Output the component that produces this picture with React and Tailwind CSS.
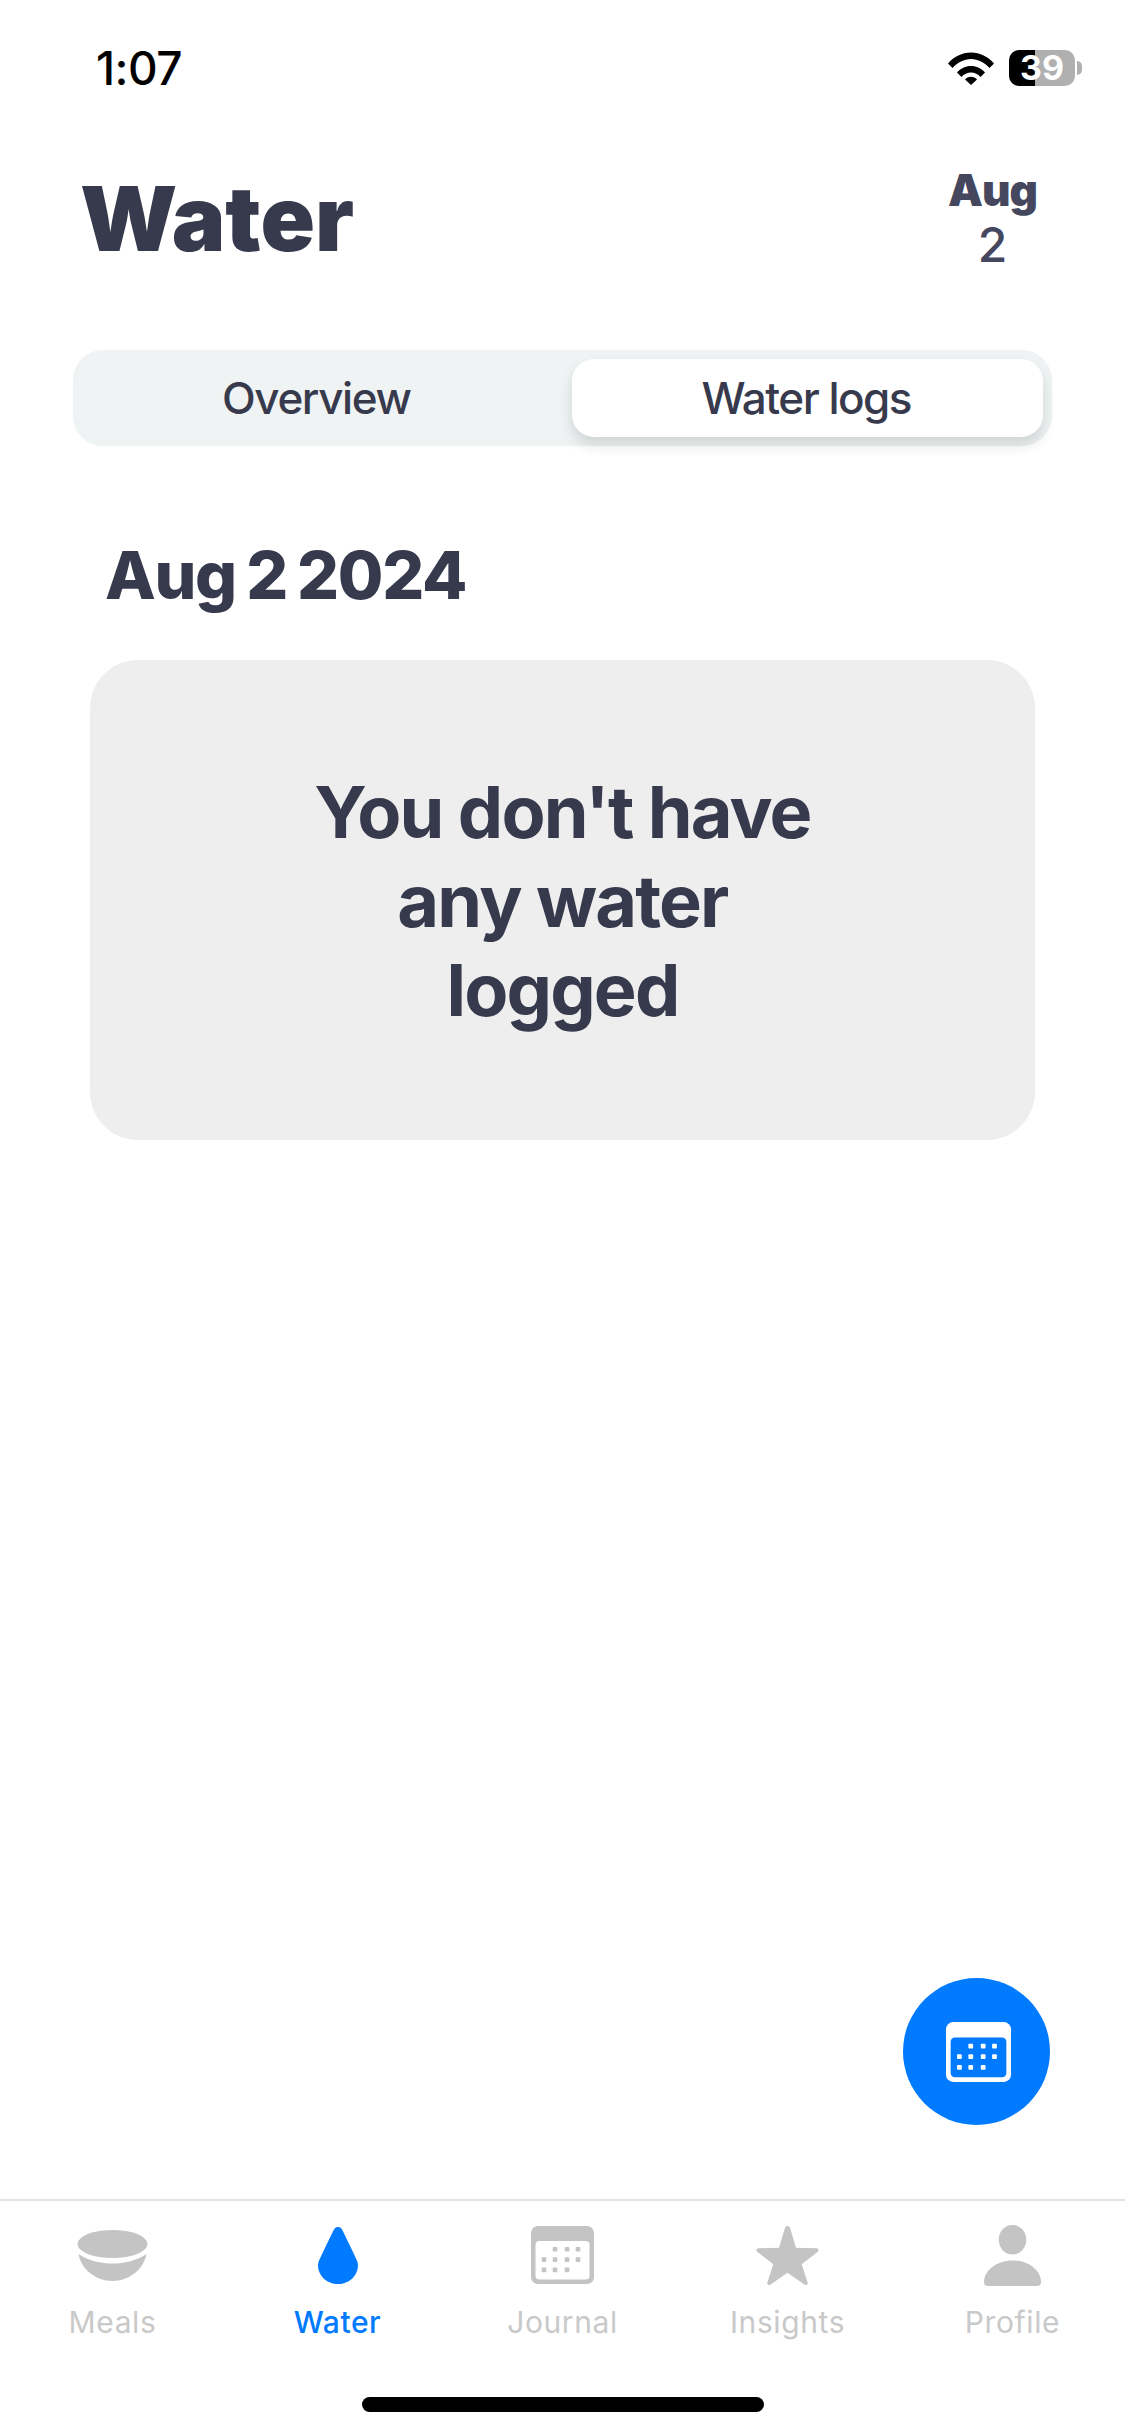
import { useState } from 'react';

const CalendarIcon = ({ className, frame, dots, body }) => {
  const rows = [
    [24, 36, 47],
    [13, 24, 36, 47],
    [13, 24, 36],
  ];
  return (
    <svg viewBox="0 0 63 58" className={className}>
      <rect width="63" height="58" rx="7" fill={frame} />
      <rect x="4.5" y="15" width="54" height="38.5" rx="4" fill={body} />
      {rows.map((row, r) =>
        row.map((x) => (
          <rect key={`${r}-${x}`} x={x - 2.3} y={21 + r * 10.3} width="4.6" height="4.6" rx="0.8" fill={dots} />
        ))
      )}
    </svg>
  );
};

const BowlIcon = () => (
  <svg viewBox="0 0 71 51" className="w-[71px] h-[51px]">
    <ellipse cx="35.5" cy="14" rx="35" ry="14" fill="#c4c4c4" />
    <path d="M1.5 24C12 31 24 33.5 35.5 33.5S59 31 69.5 24C67 39 52 51 35.5 51S4 39 1.5 24Z" fill="#c4c4c4" />
  </svg>
);

const DropIcon = () => (
  <svg viewBox="0 0 40 57" className="w-[40px] h-[57px]">
    <path
      d="M20 0C22.5 0 23.6 1.6 24.6 3.6L36.4 28C38.6 32.6 40 35.5 40 38C40 49 31 57 20 57S0 49 0 38C0 35.5 1.4 32.6 3.6 28L15.4 3.6C16.4 1.6 17.5 0 20 0Z"
      fill="#007aff"
    />
  </svg>
);

const StarIcon = () => (
  <svg viewBox="0 0 64 60" className="w-[63px] h-[59px]">
    <path
      d="M32 0C33.6 0 34.4 1.2 34.9 3L40.6 22L61 22.6C63.8 22.7 64.6 24.8 62.6 26.4L46.4 39L52.4 57.2C53.2 59.6 51.2 60.8 49.2 59.4L32 47.6L14.8 59.4C12.8 60.8 10.8 59.6 11.6 57.2L17.6 39L1.4 26.4C-0.6 24.8 0.2 22.7 3 22.6L23.4 22L29.1 3C29.6 1.2 30.4 0 32 0Z"
      fill="#c4c4c4"
    />
  </svg>
);

const PersonIcon = () => (
  <svg viewBox="0 0 58 62" className="w-[59px] h-[61px]">
    <ellipse cx="29" cy="15" rx="14" ry="15" fill="#c4c4c4" />
    <path d="M0 58C0 46 13 36 29 36S58 46 58 58C58 60.5 56.5 62 54 62H4C1.5 62 0 60.5 0 58Z" fill="#c4c4c4" />
  </svg>
);

const WifiIcon = () => (
  <svg viewBox="0 0 46 33" className="w-[46px] h-[33px]">
    <path d="M0 11.5C6 4.5 14 0.5 23 0.5S40 4.5 46 11.5L41.5 16C36.5 10.5 30 7 23 7S9.5 10.5 4.5 16Z" fill="#000" />
    <path d="M9 20.5C12.5 16.5 17.5 14 23 14S33.5 16.5 37 20.5L32.5 25C30 22.2 26.7 20.5 23 20.5S16 22.2 13.5 25Z" fill="#000" />
    <path d="M17 27.5C18.5 25.8 20.6 24.8 23 24.8S27.5 25.8 29 27.5L23 33Z" fill="#000" />
  </svg>
);

const tabs = [
  { label: 'Meals', icon: <BowlIcon /> },
  { label: 'Water', icon: <DropIcon />, active: true },
  {
    label: 'Journal',
    icon: <CalendarIcon className="w-[63px] h-[58px]" frame="#c4c4c4" dots="#c4c4c4" body="#ffffff" />,
  },
  { label: 'Insights', icon: <StarIcon /> },
  { label: 'Profile', icon: <PersonIcon /> },
];

const App = () => {
  const [activeTab, setActiveTab] = useState('logs');

  return (
    <div className="relative w-[1125px] h-[2436px] bg-white flex flex-col overflow-hidden font-['Inter',sans-serif] text-[#373a4d]">
      {/* Status bar */}
      <div className="h-[100px] pl-[96px] pr-[43px] pt-[44px] flex justify-between items-start">
        <span className="text-[46px] leading-[48px] font-medium tracking-[-0.5px] text-black">1:07</span>
        <div className="flex items-center gap-[15px] pt-[6px]">
          <WifiIcon />
          <div className="flex items-center gap-[2px]">
            <div className="w-[66px] h-[36px] rounded-[10px] bg-[linear-gradient(90deg,#000_39%,#b0b0b0_39%)] flex items-center justify-center text-white text-[34px] leading-none font-bold">
              39
            </div>
            <div className="w-[5px] h-[14px] rounded-r-full bg-[#b0b0b0]" />
          </div>
        </div>
      </div>

      {/* Header */}
      <div className="h-[250px] pl-[80px] pr-[88px] flex justify-between items-start">
        <h1 className="mt-[69px] text-[90px] leading-[100px] font-black">Water</h1>
        <div className="mt-[62px] flex flex-col items-center text-[#45475f]">
          <span className="text-[44px] leading-[56px] font-black tracking-[-1px]">Aug</span>
          <span className="text-[48px] leading-[54px] font-medium">2</span>
        </div>
      </div>

      {/* Segmented control */}
      <div className="ml-[73px] w-[979px] h-[96px] rounded-[30px] bg-[#eff3f4] p-[9px] grid grid-cols-2 gap-[18px]">
        <button
          onClick={() => setActiveTab('overview')}
          className="text-[44px] leading-none font-medium tracking-[-1.4px] rounded-[22px] pr-[3px]"
        >
          Overview
        </button>
        <button
          onClick={() => setActiveTab('logs')}
          className={`text-[44px] leading-none font-medium tracking-[-1.5px] rounded-[22px] pr-[2px] ${
            activeTab === 'logs' ? 'bg-white shadow-[0_8px_14px_rgba(0,0,0,0.13)]' : ''
          }`}
        >
          Water logs
        </button>
      </div>

      {/* Day */}
      <h2 className="mt-[90px] ml-[105px] text-[66px] leading-[78px] font-extrabold tracking-[-1.3px] [word-spacing:-3px]">
        Aug 2 2024
      </h2>

      <div className="mt-[46px] mx-[90px] h-[480px] rounded-[48px] bg-[#eeeeee] flex items-center justify-center">
        <p className="w-[560px] text-center text-[72px] leading-[89px] font-bold tracking-[-1.8px]">
          You don't have any water logged
        </p>
      </div>

      <div className="flex-1" />

      {/* Floating calendar button */}
      <button className="absolute left-[903px] top-[1978px] w-[147px] h-[147px] rounded-full bg-[#007aff] flex items-center justify-center">
        <CalendarIcon className="w-[65px] h-[60px] ml-[3px]" frame="#ffffff" dots="#ffffff" body="#007aff" />
      </button>

      {/* Tab bar */}
      <nav className="h-[237px] border-t-2 border-[#e3e3e3] grid grid-cols-5">
        {tabs.map((tab) => (
          <div key={tab.label} className="flex flex-col items-center">
            <div className="h-[68px] mt-[20px] flex items-center justify-center">{tab.icon}</div>
            <span
              className={`mt-[15px] text-[30px] leading-[36px] tracking-[0.6px] ${
                tab.active ? 'text-[#007aff] font-medium' : 'text-[#c9c9c9]'
              }`}
            >
              {tab.label}
            </span>
          </div>
        ))}
      </nav>

      {/* Home indicator */}
      <div className="absolute left-[362px] top-[2397px] w-[402px] h-[15px] rounded-full bg-black" />
    </div>
  );
};

export default App;
